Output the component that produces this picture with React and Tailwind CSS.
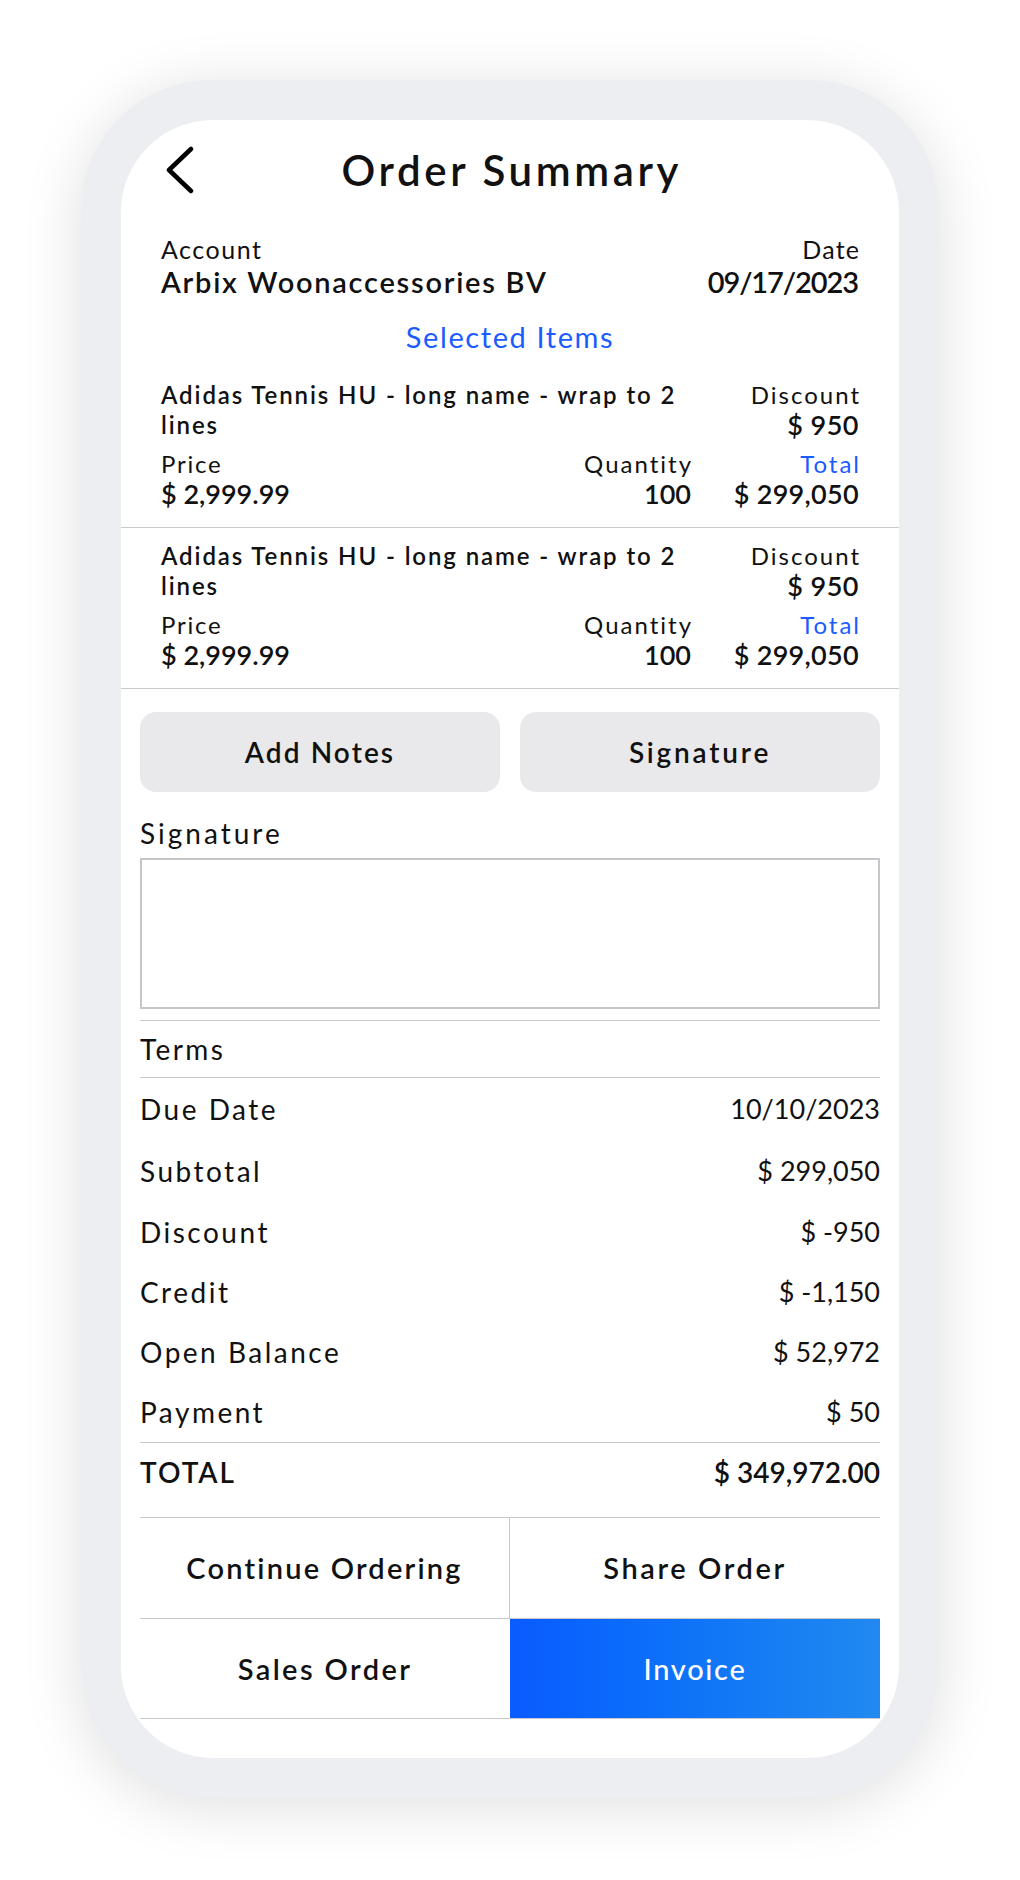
import React from "react";

const font = { fontFamily: "Lato, 'Noto Sans', sans-serif" };

function Item() {
  return (
    <div className="border-b border-[#c9c9cd] px-[40px] pt-[13px] pb-[18px]">
      <div className="flex justify-between">
        <div className="text-[24px] leading-[30px] font-semibold text-[#111] tracking-[1.9px]">
          Adidas Tennis HU - long name - wrap to 2
          <br />
          lines
        </div>
        <div className="text-right">
          <div className="text-[24px] leading-[30px] text-[#111] tracking-[2px] -mr-[2px]">Discount</div>
          <div className="text-[27px] leading-[30px] font-semibold text-[#111] tracking-[0.5px]">$ 950</div>
        </div>
      </div>
      <div className="mt-[9px] flex items-end">
        <div className="flex-1">
          <div className="text-[24px] leading-[30px] text-[#111] tracking-[1.8px]">Price</div>
          <div className="text-[27px] leading-[30px] font-semibold text-[#111]">$ 2,999.99</div>
        </div>
        <div className="text-right">
          <div className="text-[24px] leading-[30px] text-[#111] tracking-[2px] -mr-[2px]">Quantity</div>
          <div className="text-[27px] leading-[30px] font-semibold text-[#111]">100</div>
        </div>
        <div className="w-[168px] text-right">
          <div className="text-[24px] leading-[30px] text-[#1a5cff] tracking-[2px] -mr-[2px]">Total</div>
          <div className="text-[27px] leading-[30px] font-semibold text-[#111] tracking-[0.3px]">$ 299,050</div>
        </div>
      </div>
    </div>
  );
}

function Row({ label, value, h }) {
  return (
    <div className={`flex items-center justify-between ${h}`}>
      <span className="text-[28px] text-[#111] tracking-[2.5px]">{label}</span>
      <span className="text-[27px] text-[#111]">{value}</span>
    </div>
  );
}

export default function App() {
  return (
    <div className="w-[1020px] h-[1880px] bg-white pt-[80px]" style={font}>
      <div className="mx-auto w-[858px] h-[1718px] rounded-[130px] bg-[#eceef2] p-[40px] shadow-[0_8px_60px_rgba(0,0,0,0.13)]">
        <div className="h-full rounded-[92px] bg-white overflow-hidden flex flex-col">
          {/* Header */}
          <div className="grid grid-cols-[1fr_auto_1fr] items-center h-[100px]">
            <div className="pl-[45px] flex items-center">
              <svg width="32" height="48" viewBox="0 0 32 48" fill="none">
                <polyline points="25,5 3,26 25,47" stroke="#000" strokeWidth="4.5" strokeLinecap="round" strokeLinejoin="round" transform="translate(0,-2)" />
              </svg>
            </div>
            <div className="text-[42px] font-semibold text-[#111] leading-[50px] tracking-[3.6px] -mr-[3.6px]">Order Summary</div>
            <div />
          </div>

          {/* Account */}
          <div className="px-[40px] pt-[14px] flex justify-between">
            <div>
              <div className="text-[25px] leading-[30px] text-[#111] tracking-[1.5px]">Account</div>
              <div className="text-[29px] leading-[36px] font-semibold text-[#111] tracking-[1.75px]">Arbix Woonaccessories BV</div>
            </div>
            <div className="text-right">
              <div className="text-[25px] leading-[30px] text-[#111] tracking-[1.2px] -mr-[1.2px]">Date</div>
              <div className="text-[29px] leading-[36px] font-semibold text-[#111] tracking-[-1.1px] -mr-[-1.1px]">09/17/2023</div>
            </div>
          </div>

          <div className="mt-[19px] text-center text-[29px] leading-[36px] text-[#1a5cff] tracking-[1.6px]">Selected Items</div>

          <div className="mt-[12px]">
            <Item />
            <Item />
          </div>

          <div className="px-[19px]">
            <div className="mt-[23px] grid grid-cols-2 gap-[20px]">
              <button className="h-[80px] rounded-[16px] bg-[#e9e9eb] text-[28px] font-semibold text-[#111] tracking-[2.1px]">Add Notes</button>
              <button className="h-[80px] rounded-[16px] bg-[#e9e9eb] text-[28px] font-semibold text-[#111] tracking-[2.8px]">Signature</button>
            </div>

            <div className="mt-[23px] text-[28px] leading-[36px] text-[#111] tracking-[3px]">Signature</div>
            <div className="mt-[7px] h-[151px] border-2 border-[#c6c6ca]" />

            <div className="mt-[11px] h-[58px] border-y border-[#c9c9cd] flex items-center text-[28px] text-[#111] tracking-[2.4px]">Terms</div>

            <Row label="Due Date" value="10/10/2023" h="h-[62px]" />
            <Row label="Subtotal" value="$ 299,050" h="h-[62px]" />
            <Row label="Discount" value="$ -950" h="h-[60px]" />
            <Row label="Credit" value="$ -1,150" h="h-[60px]" />
            <Row label="Open Balance" value="$ 52,972" h="h-[60px]" />
            <Row label="Payment" value="$ 50" h="h-[60px]" />

            <div className="h-[58px] border-t border-[#c9c9cd] flex items-center justify-between">
              <span className="text-[28px] font-semibold text-[#111] tracking-[2px]">TOTAL</span>
              <span className="text-[28px] font-semibold text-[#111]">$ 349,972.00</span>
            </div>

            <div className="mt-[17px] grid grid-cols-2 border-y border-[#c9c9cd]">
              <div className="h-[100px] flex items-center justify-center border-r border-[#c9c9cd] text-[29px] font-semibold text-[#111] tracking-[2.2px]">Continue Ordering</div>
              <div className="h-[100px] flex items-center justify-center text-[29px] font-semibold text-[#111] tracking-[2.6px]">Share Order</div>
              <div className="h-[100px] flex items-center justify-center border-t border-[#c9c9cd] text-[29px] font-semibold text-[#111] tracking-[2.4px]">Sales Order</div>
              <div className="h-[100px] flex items-center justify-center border-t border-[#c9c9cd] bg-gradient-to-r from-[#0b5bff] to-[#2189ef] text-[29px] font-medium text-white tracking-[1.7px]">Invoice</div>
            </div>
          </div>
        </div>
      </div>
    </div>
  );
}
